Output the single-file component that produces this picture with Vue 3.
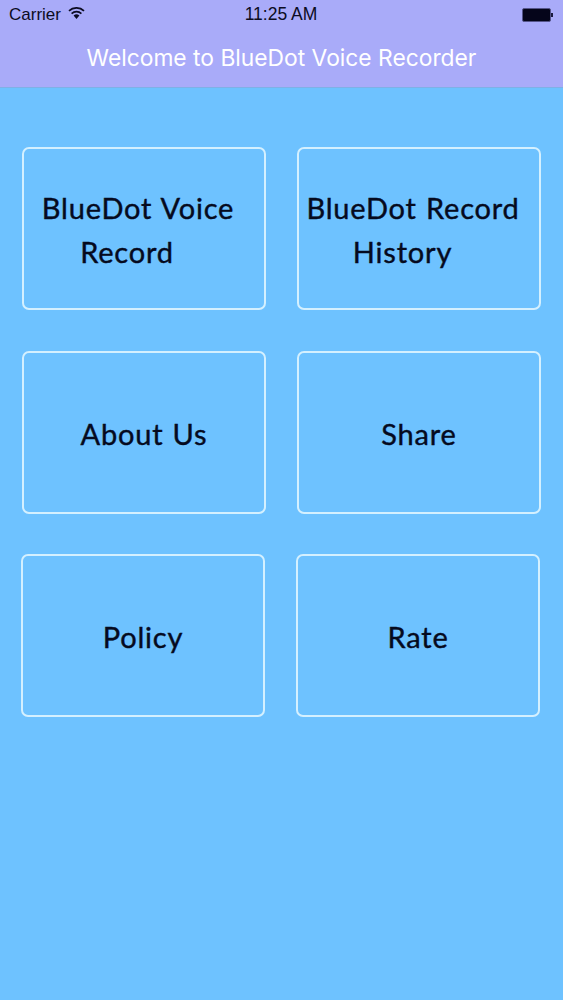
<script setup>
const rows = [
  { cls: 'row', cards: [
    { lines: [{ t: 'BlueDot Voice', c: 'l1' }, { t: 'Record', c: 'l2' }] },
    { lines: [{ t: 'BlueDot Record', c: 'l3' }, { t: 'History', c: 'l4' }] },
  ] },
  { cls: 'row', cards: [
    { lines: [{ t: 'About Us', c: '' }] },
    { lines: [{ t: 'Share', c: '' }] },
  ] },
  { cls: 'row last', cards: [
    { lines: [{ t: 'Policy', c: '' }] },
    { lines: [{ t: 'Rate', c: '' }] },
  ] },
]
</script>

<template>
  <div class="page">
    <header class="top">
      <div class="status">
        <div class="left">
          <span class="carrier">Carrier</span>
          <svg class="wifi" width="17" height="12" viewBox="0 0 17 12">
            <path d="M8.5 12 L5.6 8.6 A4.4 4.4 0 0 1 11.4 8.6 Z" fill="#0c0c22" />
            <path d="M3.6 6.6 A7.2 7.2 0 0 1 13.4 6.6" fill="none" stroke="#0c0c22" stroke-width="1.7" />
            <path d="M1 3.8 A11 11 0 0 1 16 3.8" fill="none" stroke="#0c0c22" stroke-width="1.7" />
          </svg>
        </div>
        <span class="time">11:25 AM</span>
        <div class="battery"><span class="cell"></span><span class="nub"></span></div>
      </div>
      <h1 class="title">Welcome to BlueDot Voice Recorder</h1>
    </header>
    <main class="grid">
      <div v-for="(r, i) in rows" :key="i" :class="r.cls">
        <button v-for="(c, j) in r.cards" :key="j" class="card">
          <span v-for="l in c.lines" :key="l.t" class="line" :class="l.c">{{ l.t }}</span>
        </button>
      </div>
    </main>
  </div>
</template>

<style>
html, body { margin: 0; background: #6ec2ff; }
</style>

<style scoped>
.page {
  width: 563px;
  height: 1000px;
  background: #6ec2ff;
  overflow: hidden;
}
.top {
  height: 87px;
  background: #a9abf9;
  border-bottom: 1px solid #7fb0e6;
  box-sizing: content-box;
}
.status {
  height: 29px;
  display: grid;
  grid-template-columns: 1fr auto 1fr;
  align-items: center;
  padding: 0 10px 0 9px;
  font-family: "Liberation Sans", Arial, sans-serif;
  color: #0c0c22;
}
.left { display: flex; align-items: center; gap: 7px; }
.carrier { font-size: 17px; }
.wifi { margin-top: -3px; }
.time { font-size: 17.5px; }
.battery { justify-self: end; display: flex; align-items: center; }
.cell {
  display: block;
  width: 29px;
  height: 14px;
  background: #05051a;
  border: 1px solid #55558a;
  border-radius: 2px;
  box-sizing: border-box;
}
.nub { width: 2px; height: 4px; background: #1a1a40; }
.title {
  margin: 0;
  padding-top: 2px;
  height: 56px;
  box-sizing: border-box;
  line-height: 54px;
  text-align: center;
  font-family: "Inter", "Liberation Sans", sans-serif;
  font-size: 22.8px;
  font-weight: 400;
  color: #fff;
  white-space: nowrap;
}
.grid {
  display: flex;
  flex-direction: column;
  gap: 40.5px;
  padding-top: 59px;
}
.row {
  display: flex;
  gap: 31px;
  padding-left: 22px;
}
.row.last { padding-left: 21px; }
.card {
  width: 244px;
  height: 163px;
  box-sizing: border-box;
  padding: 3px 0 0;
  background: transparent;
  border: 2px solid #d4f0ff;
  border-radius: 7px;
  display: flex;
  flex-direction: column;
  align-items: center;
  justify-content: center;
  font-family: "Lato", "Open Sans", sans-serif;
  font-size: 29px;
  letter-spacing: 0.8px;
  word-spacing: 1px;
  line-height: 44px;
  color: #050a1e;
  -webkit-text-stroke: 0.4px #050a1e;
  white-space: nowrap;
}
.l1 { margin-right: 12px; }
.l2 { margin-right: 34px; }
.l3 { margin-right: 12px; }
.l4 { margin-right: 33px; }
</style>
